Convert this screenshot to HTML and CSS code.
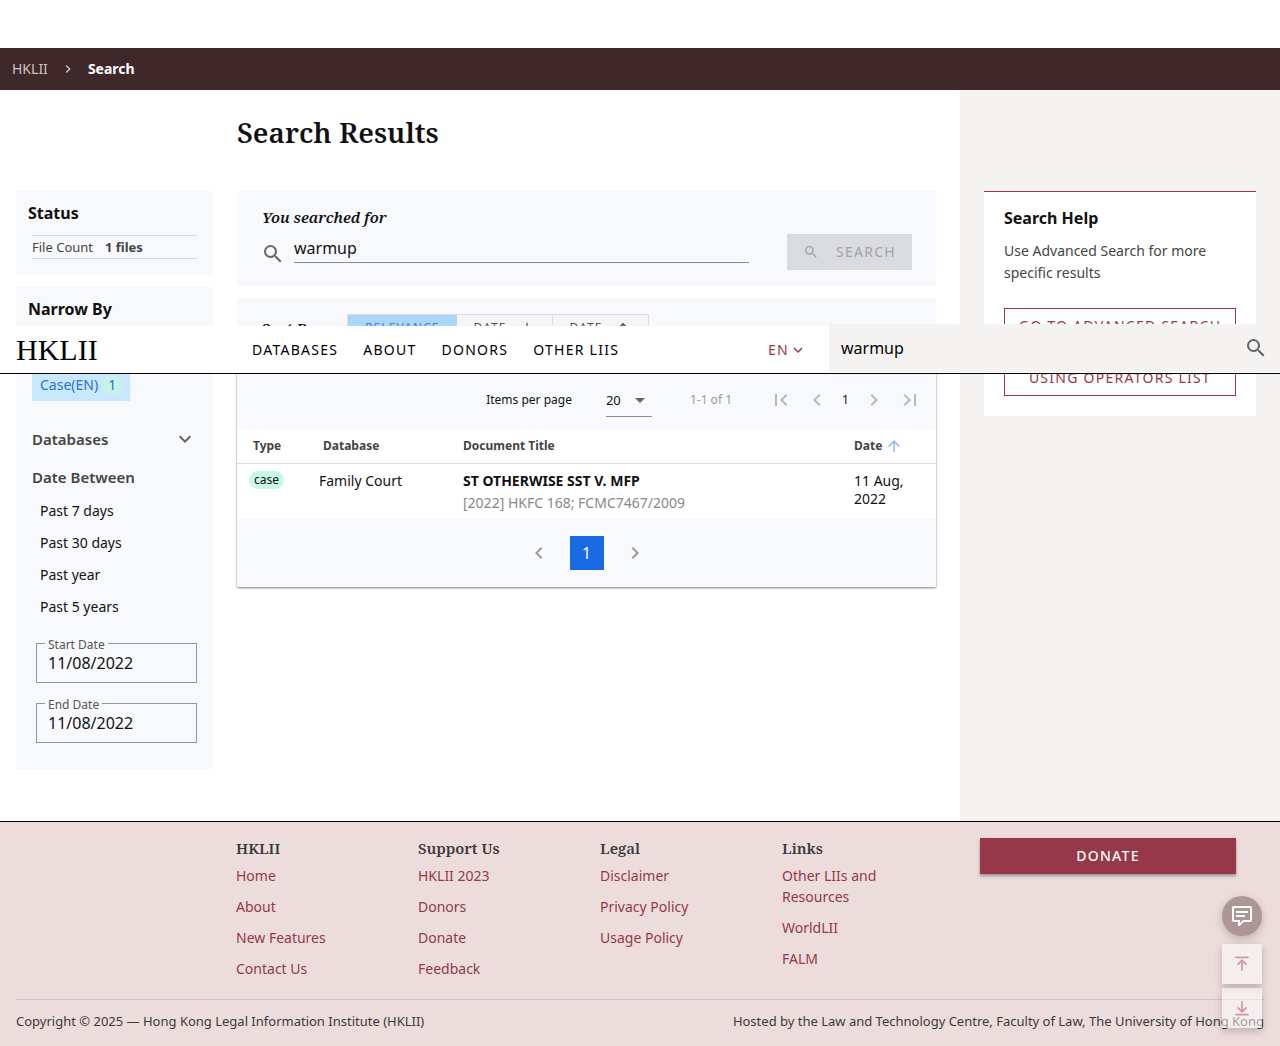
FILE: index.html
```html
<!DOCTYPE html>
<html lang="en">
<head>
<meta charset="utf-8">
<meta name="viewport" content="width=device-width, initial-scale=1">
<title>Search Results - HKLII</title>
<link rel="stylesheet" href="styles.css">
</head>
<body>
<svg class="sprite" aria-hidden="true">
  <symbol id="i-search" viewBox="0 0 24 24"><path d="M9.5 3A6.5 6.5 0 0 1 16 9.500c0 1.610-.59 3.090-1.560 4.230l.27.27h.79l5 5-1.500 1.500-5-5v-.79l-.27-.27A6.520 6.520 0 0 1 9.500 16 6.500 6.500 0 0 1 3 9.500 6.500 6.500 0 0 1 9.500 3m0 2C7 5 5 7 5 9.500S7 14 9.500 14 14 12 14 9.500 12 5 9.500 5z"/></symbol>
  <symbol id="i-down" viewBox="0 0 24 24"><path d="M7.410 8.580 12 13.170l4.590-4.590L18 10l-6 6-6-6z"/></symbol>
  <symbol id="i-left" viewBox="0 0 24 24"><path d="M15.410 16.580 10.830 12l4.580-4.590L14 6l-6 6 6 6z"/></symbol>
  <symbol id="i-right" viewBox="0 0 24 24"><path d="M8.590 16.580 13.170 12 8.590 7.410 10 6l6 6-6 6z"/></symbol>
  <symbol id="i-first" viewBox="0 0 24 24"><path d="M18.410 16.590 13.820 12l4.590-4.590L17 6l-6 6 6 6zM6 6h2v12H6z"/></symbol>
  <symbol id="i-last" viewBox="0 0 24 24"><path d="M5.590 7.410 10.180 12l-4.590 4.590L7 18l6-6-6-6zM16 6h2v12h-2z"/></symbol>
  <symbol id="i-arrow-up" viewBox="0 0 24 24"><path d="M13 20h-2V8l-5.500 5.500-1.420-1.420L12 4.160l7.920 7.920-1.420 1.420L13 8z"/></symbol>
  <symbol id="i-arrow-down" viewBox="0 0 24 24"><path d="M11 4h2v12l5.500-5.500 1.420 1.420L12 19.840l-7.920-7.920L5.500 10.500 11 16z"/></symbol>
  <symbol id="i-message" viewBox="0 0 24 24"><path d="M4 2h16a2 2 0 0 1 2 2v12a2 2 0 0 1-2 2h-6.500L9.800 21.700A1 1 0 0 1 8 21v-3H4a2 2 0 0 1-2-2V4c0-1.100.9-2 2-2m0 2v12h6v3.080L13.080 16H20V4zm2 3h12v2H6zm0 4h9v2H6z"/></symbol>
  <symbol id="i-top" viewBox="0 0 24 24"><path d="M4 3h16v2H4zm3.400 10.400L6 12l6-6 6 6-1.400 1.400L13 9.800V20h-2V9.800z"/></symbol>
  <symbol id="i-bottom" viewBox="0 0 24 24"><path d="M4 19h16v2H4zm2-7 1.400-1.400 3.600 3.600V4h2v10.200l3.600-3.600L18 12l-6 6z"/></symbol>
</svg>

<header class="site-header">
  <a class="logo" href="#">HKLII</a>
  <nav class="main-nav" aria-label="Main">
    <a href="#">DATABASES</a>
    <a href="#">ABOUT</a>
    <a href="#">DONORS</a>
    <a href="#">OTHER LIIS</a>
  </nav>
  <button class="lang" type="button">EN<svg class="icon icon-18"><use href="#i-down"/></svg></button>
  <form class="header-search" role="search">
    <input type="text" value="warmup" aria-label="Search HKLII">
    <button type="button" aria-label="Search"><svg class="icon icon-24"><use href="#i-search"/></svg></button>
  </form>
</header>

<nav class="breadcrumb" aria-label="Breadcrumb">
  <a href="#">HKLII</a>
  <svg class="icon icon-16"><use href="#i-right"/></svg>
  <strong>Search</strong>
</nav>

<div class="page">
  <main class="content">
    <h1>Search Results</h1>

    <aside class="filters">
      <section class="panel status">
        <h2>Status</h2>
        <p class="file-count"><span>File Count</span><strong>1 files</strong></p>
      </section>
      <section class="panel narrow">
        <h2>Narrow By</h2>
        <div class="chips"><button class="chip" type="button">Case(EN)<span class="count">1</span></button></div>
        <button class="group" type="button">Databases<svg class="icon icon-24"><use href="#i-down"/></svg></button>
        <h3>Date Between</h3>
        <ul class="ranges">
          <li><a href="#">Past 7 days</a></li>
          <li><a href="#">Past 30 days</a></li>
          <li><a href="#">Past year</a></li>
          <li><a href="#">Past 5 years</a></li>
        </ul>
        <div class="date-field"><label for="start">Start Date</label><input id="start" type="text" value="11/08/2022"></div>
        <div class="date-field"><label for="end">End Date</label><input id="end" type="text" value="11/08/2022"></div>
      </section>
    </aside>

    <div class="results">
      <section class="panel searched">
        <label class="serif-label" for="query">You searched for</label>
        <div class="query-row">
          <svg class="icon icon-24"><use href="#i-search"/></svg>
          <input id="query" type="text" value="warmup">
          <button type="button" disabled><svg class="icon icon-16"><use href="#i-search"/></svg>SEARCH</button>
        </div>
      </section>

      <section class="panel sort">
        <span class="serif-label">Sort By</span>
        <div class="toggle">
          <button class="active" type="button">RELEVANCE</button>
          <button type="button">DATE<svg class="icon icon-16"><use href="#i-arrow-down"/></svg></button>
          <button type="button">DATE<svg class="icon icon-16"><use href="#i-arrow-up"/></svg></button>
        </div>
      </section>

      <section class="table-card">
        <div class="pager-top">
          <label for="per-page">Items per page</label>
          <div class="per-page">
            <select id="per-page"><option>20</option></select>
          </div>
          <span class="range">1-1 of 1</span>
          <div class="steps">
            <button type="button" aria-label="First page" disabled><svg class="icon icon-24"><use href="#i-first"/></svg></button>
            <button type="button" aria-label="Previous page" disabled><svg class="icon icon-24"><use href="#i-left"/></svg></button>
            <span>1</span>
            <button type="button" aria-label="Next page" disabled><svg class="icon icon-24"><use href="#i-right"/></svg></button>
            <button type="button" aria-label="Last page" disabled><svg class="icon icon-24"><use href="#i-last"/></svg></button>
          </div>
        </div>
        <table>
          <thead>
            <tr><th class="col-type">Type</th><th class="col-db">Database</th><th>Document Title</th><th class="col-date"><span class="sorted">Date<svg class="icon icon-18"><use href="#i-arrow-up"/></svg></span></th></tr>
          </thead>
          <tbody>
            <tr>
              <td class="type"><span class="tag">case</span></td>
              <td class="database">Family Court</td>
              <td><a class="doc" href="#">ST OTHERWISE SST V. MFP</a><span class="cite">[2022] HKFC 168; FCMC7467/2009</span></td>
              <td>11 Aug, 2022</td>
            </tr>
          </tbody>
        </table>
        <div class="pager-bottom">
          <button type="button" aria-label="Previous page" disabled><svg class="icon icon-24"><use href="#i-left"/></svg></button>
          <button class="current" type="button">1</button>
          <button type="button" aria-label="Next page" disabled><svg class="icon icon-24"><use href="#i-right"/></svg></button>
        </div>
      </section>
    </div>
  </main>

  <aside class="side">
    <section class="help">
      <h2>Search Help</h2>
      <p>Use Advanced Search for more specific results</p>
      <a class="outlined" href="#">GO TO ADVANCED SEARCH</a>
      <a class="outlined" href="#">USING OPERATORS LIST</a>
    </section>
  </aside>
</div>

<footer class="site-footer">
  <div class="footer-main">
    <div class="footer-links">
      <section><h2>HKLII</h2><ul><li><a href="#">Home</a></li><li><a href="#">About</a></li><li><a href="#">New Features</a></li><li><a href="#">Contact Us</a></li></ul></section>
      <section><h2>Support Us</h2><ul><li><a href="#">HKLII 2023</a></li><li><a href="#">Donors</a></li><li><a href="#">Donate</a></li><li><a href="#">Feedback</a></li></ul></section>
      <section><h2>Legal</h2><ul><li><a href="#">Disclaimer</a></li><li><a href="#">Privacy Policy</a></li><li><a href="#">Usage Policy</a></li></ul></section>
      <section><h2>Links</h2><ul><li><a href="#">Other LIIs and Resources</a></li><li><a href="#">WorldLII</a></li><li><a href="#">FALM</a></li></ul></section>
    </div>
    <button class="donate" type="button">DONATE</button>
  </div>
  <div class="legal">
    <span>Copyright © 2025 — Hong Kong Legal Information Institute (HKLII)</span>
    <span>Hosted by the Law and Technology Centre, Faculty of Law, The University of Hong Kong</span>
  </div>
</footer>

<div class="floating">
  <button class="feedback" type="button" aria-label="Feedback"><svg class="icon icon-24"><use href="#i-message"/></svg></button>
  <button class="jump" type="button" aria-label="Go to top"><svg class="icon icon-20"><use href="#i-top"/></svg></button>
  <button class="jump" type="button" aria-label="Go to bottom"><svg class="icon icon-20"><use href="#i-bottom"/></svg></button>
</div>
</body>
</html>
```
FILE: styles.css
```css
:root {
  --maroon: #963848;
  --panel: #f8f9fd;
  --ink: #111;
  --muted: #444;
  --serif: "Noto Serif", "Liberation Serif", serif;
  --tracking: 0.09em;
}

* { box-sizing: border-box; }

body {
  margin: 0;
  padding-top: 48px;
  background: #fff;
  color: var(--ink);
  font-family: "Noto Sans", "Liberation Sans", sans-serif;
  font-size: 14px;
  line-height: 20px;
}

h1, h2, h3, p, ul { margin: 0; padding: 0; }
ul { list-style: none; }
a { color: inherit; text-decoration: none; }

button, input, select {
  margin: 0;
  padding: 0;
  border: 0;
  border-radius: 0;
  background: none;
  color: inherit;
  font: inherit;
}

.sprite { display: none; }
.icon { flex: none; fill: currentColor; }
.icon-16 { width: 16px; height: 16px; }
.icon-18 { width: 18px; height: 18px; }
.icon-20 { width: 20px; height: 20px; }
.icon-24 { width: 24px; height: 24px; }

/* Header floats above the page content */
.site-header {
  position: absolute;
  top: 326px;
  left: 0;
  right: 0;
  z-index: 2;
  display: flex;
  align-items: center;
  height: 48px;
  padding-left: 16px;
  border-bottom: 1px solid #000;
  background: #fff;
  color: #000;
}
.logo {
  width: 236px;
  font-family: "Liberation Serif", serif;
  font-size: 30px;
  line-height: 40px;
}
.main-nav {
  display: flex;
  flex: 1;
  gap: 25px;
  letter-spacing: var(--tracking);
}
.lang {
  display: flex;
  align-items: center;
  margin-right: 22px;
  color: var(--maroon);
  letter-spacing: var(--tracking);
}
.header-search {
  display: flex;
  align-items: center;
  align-self: flex-end;
  width: 451px;
  height: 48px;
  margin-bottom: 1px;
  padding: 0 12px;
  background: #f4f3f1;
  font-size: 16px;
}
.header-search input { flex: 1; min-width: 0; }
.header-search button { display: flex; color: #666; }

.breadcrumb {
  display: flex;
  align-items: center;
  gap: 12px;
  height: 42px;
  padding: 0 12px;
  background: #3f2829;
  color: #fff;
}
.breadcrumb a, .breadcrumb .icon { color: #cfc5c5; }

.page {
  display: grid;
  grid-template-columns: 3fr 1fr;
  min-height: 731px;
}
.content {
  display: grid;
  grid-template-columns: 197px 1fr;
  grid-template-rows: 101px 1fr;
  column-gap: 24px;
  padding: 0 24px 52px 16px;
}
h1 {
  grid-column: 2;
  padding-top: 22px;
  font-family: var(--serif);
  font-size: 28px;
  line-height: 40px;
  font-weight: 600;
}
.filters, .results {
  display: flex;
  flex-direction: column;
  gap: 12px;
  min-width: 0;
}
.panel { background: var(--panel); }
.panel h2, .help h2 { font-size: 16px; line-height: 24px; font-weight: 700; }

.status { padding: 10px 16px 16px 12px; }
.file-count {
  display: flex;
  gap: 12px;
  margin: 10px 0 0 4px;
  border: solid #d8dadd;
  border-width: 1px 0;
  color: var(--muted);
  font-size: 13px;
  line-height: 22px;
}

.narrow { padding: 10px 16px 26px; }
.narrow h2 { margin-left: -4px; }
.chips { padding-top: 48px; }
.chip {
  display: flex;
  align-items: center;
  gap: 4px;
  height: 32px;
  padding: 0 8px;
  background: #c8e8fe;
  color: #2a6fdf;
}
.count {
  width: 20px;
  border-radius: 10px;
  background: #c8f2e8;
}
.group, .narrow h3 {
  color: #444;
  font-size: 15px;
  line-height: 20px;
  font-weight: 600;
}
.group {
  display: flex;
  align-items: center;
  justify-content: space-between;
  width: 100%;
  margin-top: 26px;
}
.group .icon { color: #666; }
.narrow h3 { margin: 16px 0 8px; }
.ranges { padding-left: 8px; }
.ranges a { display: block; line-height: 32px; }
.date-field {
  position: relative;
  margin: 20px 0 0 4px;
}
.date-field label {
  position: absolute;
  top: -6px;
  left: 9px;
  padding: 0 3px;
  background: var(--panel);
  color: #555;
  font-size: 12px;
  line-height: 16px;
}
.date-field input {
  width: 100%;
  height: 40px;
  padding: 0 11px;
  border: 1px solid #95969a;
  font-size: 16px;
}

.serif-label {
  font-family: var(--serif);
  font-size: 15px;
  line-height: 20px;
  font-style: italic;
  font-weight: 600;
}
.searched { padding: 16px 24px; }
.searched .serif-label { display: block; padding-left: 1px; }
.query-row { display: flex; align-items: center; margin-top: 7px; }
.query-row > .icon { margin: 3px 9px 0 0; color: #666; }
.query-row input {
  flex: 1;
  min-width: 0;
  height: 29px;
  margin-bottom: 7px;
  border-bottom: 1px solid #8b8c90;
  font-size: 16px;
}
.query-row button {
  display: flex;
  align-items: center;
  gap: 17px;
  height: 36px;
  margin-left: 38px;
  padding: 0 16px;
  background: #dadbde;
  color: #a1a3a6;
  letter-spacing: var(--tracking);
}

.sort {
  display: flex;
  align-items: center;
  padding: 16px 24px;
}
.sort .serif-label { width: 86px; }
.toggle { display: flex; border: 1px solid #ddd; }
.toggle button {
  display: flex;
  align-items: center;
  gap: 12px;
  height: 26px;
  padding: 0 17px;
  background: #f5f5f5;
  color: #555;
  font-size: 12px;
  letter-spacing: var(--tracking);
}
.toggle button + button + button { border-left: 1px solid #ddd; }
.toggle .active { background: #abd6f8; color: #4a7fe0; }

.table-card {
  background: var(--panel);
  box-shadow: 0 1px 2px rgba(0, 0, 0, 0.5);
}
.pager-top {
  display: flex;
  align-items: center;
  justify-content: flex-end;
  height: 59px;
  padding-right: 14px;
  font-size: 12px;
}
.per-page {
  position: relative;
  width: 46px;
  margin: 0 38px 0 34px;
}
.per-page::after {
  content: "";
  position: absolute;
  top: 15px;
  right: 7px;
  border: solid transparent;
  border-width: 5px 5px 0;
  border-top-color: #666;
}
.per-page select {
  display: block;
  width: 100%;
  height: 34px;
  padding-top: 1px;
  border-bottom: 1px solid #8b8c90;
  font-size: 13px;
  appearance: none;
}
.range { color: #999; }
.steps {
  display: flex;
  align-items: center;
  gap: 12px;
  margin-left: 37px;
}
.steps button { display: flex; color: #b7b8bb; }
.steps span { width: 9px; text-align: center; }

table {
  width: 100%;
  border-collapse: collapse;
  table-layout: fixed;
  background: #fff;
}
th {
  height: 34px;
  padding: 0 0 0 16px;
  border-bottom: 1px solid #ddd;
  color: #444;
  font-size: 12px;
  font-weight: 700;
  text-align: left;
}
.col-type { width: 70px; }
.col-db { width: 140px; }
.col-date { width: 98px; }
.sorted { display: flex; align-items: center; gap: 3px; }
.sorted .icon { color: #8fb9fa; }
td {
  height: 56px;
  padding: 8px 16px 4px;
  line-height: 18px;
  vertical-align: top;
}
td.type { padding: 6px 0 0 12px; }
td.database { padding-left: 12px; }
.tag {
  display: inline-block;
  padding: 0 5px;
  border-radius: 9px;
  background: #c7f8e8;
  font-size: 12px;
  line-height: 18px;
}
.doc { display: block; font-weight: 700; }
.cite { display: block; margin-top: 4px; color: #888; }

.pager-bottom {
  display: flex;
  align-items: center;
  justify-content: center;
  gap: 19px;
  height: 68px;
}
.pager-bottom button { display: flex; color: #999; }
.pager-bottom .current {
  align-items: center;
  justify-content: center;
  width: 34px;
  height: 34px;
  background: #1a6ae3;
  color: #fff;
  font-size: 16px;
}

.side { padding: 101px 24px 0; background: #f4f3f1; }
.help {
  display: flex;
  flex-direction: column;
  gap: 16px;
  padding: 14px 20px 20px;
  border-top: 1px solid var(--maroon);
  background: #fff;
}
.help p { margin: -6px 0 8px; color: #444; line-height: 22px; }
.outlined {
  border: 1px solid var(--maroon);
  color: var(--maroon);
  line-height: 34px;
  letter-spacing: var(--tracking);
  text-align: center;
  white-space: nowrap;
}

.site-footer {
  padding: 16px 16px 15px;
  border-top: 1px solid #000;
  background: #ecdddc;
  color: #3a3a3a;
}
.footer-main {
  display: flex;
  justify-content: space-between;
  align-items: flex-start;
  min-height: 161px;
  padding: 0 28px 0 220px;
}
.footer-links {
  display: grid;
  grid-template-columns: repeat(4, 1fr);
  width: 728px;
}
.footer-links section { padding-right: 48px; }
.footer-links h2 {
  margin-bottom: 7px;
  font-family: var(--serif);
  font-size: 15px;
  line-height: 20px;
  font-weight: 600;
}
.footer-links ul { display: grid; gap: 10px; }
.footer-links li { color: var(--maroon); line-height: 21px; }
.donate {
  width: 256px;
  height: 36px;
  background: var(--maroon);
  box-shadow: 0 2px 3px rgba(0, 0, 0, 0.35);
  color: #fff;
  font-weight: 500;
  letter-spacing: var(--tracking);
}
.legal {
  display: flex;
  justify-content: space-between;
  padding-top: 11px;
  border-top: 1px solid #cfc2c3;
  font-size: 13px;
}

.floating {
  position: fixed;
  right: 18px;
  bottom: 18px;
  z-index: 3;
  display: flex;
  flex-direction: column;
  gap: 4px;
}
.floating button {
  display: flex;
  align-items: center;
  justify-content: center;
  width: 40px;
  height: 40px;
  box-shadow: 0 3px 8px rgba(60, 30, 30, 0.25);
}
.floating .feedback {
  margin-bottom: 4px;
  border-radius: 50%;
  background: #ac9796;
  color: #fff;
}
.floating .jump {
  background: rgba(255, 255, 255, 0.5);
  color: #cd98a4;
}
```
